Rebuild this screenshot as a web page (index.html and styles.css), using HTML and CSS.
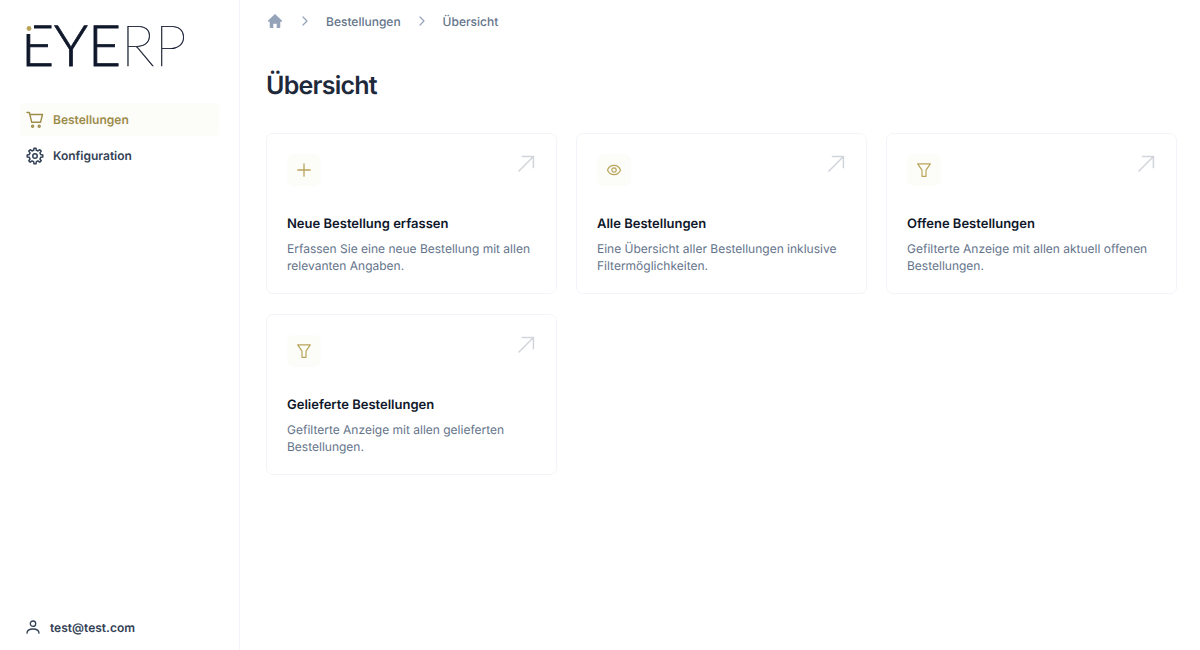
FILE: index.html
```html
<!DOCTYPE html>
<html lang="de">
<head>
    <meta charset="UTF-8">
    <meta name="viewport" content="width=device-width, initial-scale=1.0">
    <title>Übersicht - EYERP</title>
    <link rel="stylesheet" href="styles.css">
</head>
<body>
    <!-- shared icons -->
    <svg class="icon-defs" aria-hidden="true">
        <symbol id="icon-arrow" viewBox="0 0 18 18">
            <path d="M1.5 16.5 16.2 1.8M4.8 1.6h11.6v11.6" fill="none" stroke="currentColor" stroke-width="1.5"/>
        </symbol>
        <symbol id="icon-chevron" viewBox="0 0 10 10">
            <path d="M3 1l4 4-4 4" fill="none" stroke="currentColor" stroke-width="1.2" stroke-linecap="round" stroke-linejoin="round"/>
        </symbol>
        <symbol id="icon-filter" viewBox="0 0 16 16">
            <path d="M1.7 1.8h12.6L10 8.2v6.1H6V8.2z" fill="none" stroke="currentColor" stroke-width="1.2" stroke-linejoin="round"/>
        </symbol>
    </svg>

    <div class="layout">
        <aside class="sidebar">
            <a href="#" class="logo" aria-label="EYERP">
                <svg width="180" height="72" viewBox="0 0 180 72">
                    <text x="1" y="58" class="logo-text">EYE<tspan class="logo-thin">RP</tspan></text>
                    <path d="M0 10h14v16H0z" class="logo-gap"/>
                    <circle cx="9" cy="20.5" r="2.4" class="logo-dot"/>
                </svg>
            </a>

            <nav class="nav">
                <a href="#" class="nav-link active">
                    <svg width="18" height="18" viewBox="0 0 18 18" fill="none" stroke="currentColor" stroke-width="1.4" stroke-linecap="round" stroke-linejoin="round">
                        <path d="M1 1.5h2.4l2.3 9.8h8.8l2-7.800H4"/>
                        <circle cx="6.6" cy="15.3" r="1"/>
                        <circle cx="13.2" cy="15.3" r="1"/>
                    </svg>
                    Bestellungen
                </a>
                <a href="#" class="nav-link">
                    <svg width="18" height="18" viewBox="0 0 24 24" fill="none" stroke="currentColor" stroke-width="2" stroke-linejoin="round">
                        <path d="M10.2 4.4 10.7 1.500h2.600l.5 2.900c.8.200 1.500.500 2.200.900l2.400-1.700 1.900 1.900-1.700 2.400c.4.700.7 1.400.9 2.200l2.900.6v2.600l-2.900.5c-.2.800-.5 1.500-.9 2.200l1.700 2.400-1.900 1.900-2.400-1.700c-.7.4-1.400.7-2.200.9l-.5 2.900h-2.600l-.5-2.900c-.8-.2-1.500-.5-2.200-.9l-2.400 1.700-1.900-1.900 1.700-2.400c-.4-.7-.7-1.400-.9-2.200l-2.900-.5v-2.600l2.900-.6c.2-.8.5-1.500.9-2.200L3.700 5.500l1.900-1.900L8 5.300c.7-.4 1.400-.7 2.200-.9z"/>
                        <circle cx="12" cy="12" r="3"/>
                    </svg>
                    Konfiguration
                </a>
            </nav>

            <a href="#" class="user">
                <svg width="14" height="14" viewBox="0 0 14 14" fill="none" stroke="currentColor" stroke-width="1.3" stroke-linecap="round">
                    <circle cx="7" cy="3.7" r="2.7"/>
                    <path d="M1 13.2c0-2.600 2.300-4.200 6-4.200s6 1.600 6 4.200"/>
                </svg>
                test@test.com
            </a>
        </aside>

        <main class="content">
            <nav class="breadcrumb" aria-label="Breadcrumb">
                <a href="#" aria-label="Startseite">
                    <svg width="18" height="18" viewBox="0 0 16 16" class="home">
                        <path d="M8 1.800 1.900 7.600c-.5.5-.3 1 .3 1h1.100v4.800c0 .5.300.8.800.8h2.400v-3.700h3v3.700h2.400c.5 0 .8-.3.800-.8V8.600h1.100c.6 0 .8-.5.300-1z" fill="currentColor"/>
                    </svg>
                </a>
                <svg width="10" height="10" class="chevron"><use href="#icon-chevron"/></svg>
                <a href="#">Bestellungen</a>
                <svg width="10" height="10" class="chevron"><use href="#icon-chevron"/></svg>
                <a href="#">Übersicht</a>
            </nav>

            <h1>Übersicht</h1>

            <div class="cards">
                <a href="#" class="card">
                    <div class="card-top">
                        <span class="card-icon">
                            <svg width="16" height="16" viewBox="0 0 16 16" fill="none" stroke="currentColor" stroke-width="1.3" stroke-linecap="round">
                                <path d="M8 1.800v12.400M1.800 8h12.400"/>
                            </svg>
                        </span>
                        <svg width="18" height="18" class="arrow"><use href="#icon-arrow"/></svg>
                    </div>
                    <h2>Neue Bestellung erfassen</h2>
                    <p>Erfassen Sie eine neue Bestellung mit allen relevanten Angaben.</p>
                </a>

                <a href="#" class="card">
                    <div class="card-top">
                        <span class="card-icon">
                            <svg width="16" height="16" viewBox="0 0 16 16" fill="none" stroke="currentColor" stroke-width="1.2">
                                <path d="M1.500 8c1.200-3 3.600-4.700 6.500-4.700s5.300 1.700 6.500 4.700c-1.200 3-3.600 4.700-6.500 4.700S2.700 11 1.500 8z"/>
                                <circle cx="8" cy="8" r="2.2"/>
                            </svg>
                        </span>
                        <svg width="18" height="18" class="arrow"><use href="#icon-arrow"/></svg>
                    </div>
                    <h2>Alle Bestellungen</h2>
                    <p>Eine Übersicht aller Bestellungen inklusive Filtermöglichkeiten.</p>
                </a>

                <a href="#" class="card">
                    <div class="card-top">
                        <span class="card-icon">
                            <svg width="16" height="16"><use href="#icon-filter"/></svg>
                        </span>
                        <svg width="18" height="18" class="arrow"><use href="#icon-arrow"/></svg>
                    </div>
                    <h2>Offene Bestellungen</h2>
                    <p>Gefilterte Anzeige mit allen aktuell offenen Bestellungen.</p>
                </a>

                <a href="#" class="card">
                    <div class="card-top">
                        <span class="card-icon">
                            <svg width="16" height="16"><use href="#icon-filter"/></svg>
                        </span>
                        <svg width="18" height="18" class="arrow"><use href="#icon-arrow"/></svg>
                    </div>
                    <h2>Gelieferte Bestellungen</h2>
                    <p>Gefilterte Anzeige mit allen gelieferten Bestellungen.</p>
                </a>
            </div>
        </main>
    </div>
</body>
</html>
```
FILE: styles.css
```css
* {
    margin: 0;
    padding: 0;
    box-sizing: border-box;
}

body {
    font-family: Inter, "Liberation Sans", sans-serif;
    font-size: 12px;
    text-rendering: geometricPrecision;
    color: #334155;
    background: white;
}

a {
    color: inherit;
    text-decoration: none;
}

svg {
    display: block;
    flex-shrink: 0;
}

.icon-defs {
    display: none;
}

.layout {
    display: flex;
    min-height: 100vh;
}

.sidebar {
    width: 240px;
    flex-shrink: 0;
    display: flex;
    flex-direction: column;
    padding: 8px 20px 14px;
    border-right: 1px solid #f1f5f9;
}

.logo-text {
    font-family: Lato, sans-serif;
    font-size: 57px;
    font-weight: 300;
    fill: #0f172a;
    stroke: #0f172a;
    stroke-width: 0.8;
}

.logo-thin {
    font-weight: 100;
    stroke-width: 0.4;
}

.logo-gap {
    fill: white;
}

.logo-dot {
    fill: #b9a45a;
}

.nav {
    display: flex;
    flex-direction: column;
    gap: 3px;
    margin-top: 23px;
}

.nav-link {
    display: flex;
    align-items: center;
    gap: 9px;
    height: 33px;
    padding: 0 6px;
    border-radius: 4px;
    font-weight: 600;
}

.nav-link.active {
    color: #9c8d4a;
    background: #fcfcf9;
}

.user {
    display: flex;
    align-items: center;
    gap: 10px;
    height: 18px;
    margin-top: auto;
    padding: 0 6px;
    font-weight: 600;
}

.content {
    flex: 1;
    padding: 12px 23px 24px 26px;
}

.breadcrumb {
    display: flex;
    align-items: center;
    gap: 16px;
    height: 18px;
    color: #64748b;
    font-weight: 500;
}

.home,
.chevron {
    color: #94a3b8;
}

h1 {
    margin: 40px 0 30px;
    color: #1e293b;
    font-size: 25px;
    line-height: 33px;
    font-weight: 600;
    letter-spacing: -0.03em;
}

.cards {
    display: grid;
    grid-template-columns: repeat(3, 1fr);
    gap: 20px 19px;
}

.card {
    padding: 20px 20px 19px;
    border: 1px solid #f1f5f9;
    border-radius: 7px;
}

.card-top {
    display: flex;
    justify-content: space-between;
    align-items: flex-start;
    margin-bottom: 28px;
}

.card-icon {
    display: flex;
    align-items: center;
    justify-content: center;
    width: 34px;
    height: 32px;
    border-radius: 7px;
    color: #b9a45a;
    background: #fcfcf9;
}

.arrow {
    margin: 1px;
    color: #d1d5db;
}

h2 {
    margin-bottom: 6px;
    color: #0f172a;
    font-size: 13px;
    line-height: 20px;
    font-weight: 600;
}

.card p {
    color: #64748b;
    line-height: 17px;
}

@media (max-width: 900px) {
    .cards {
        grid-template-columns: 1fr;
    }
}
```
